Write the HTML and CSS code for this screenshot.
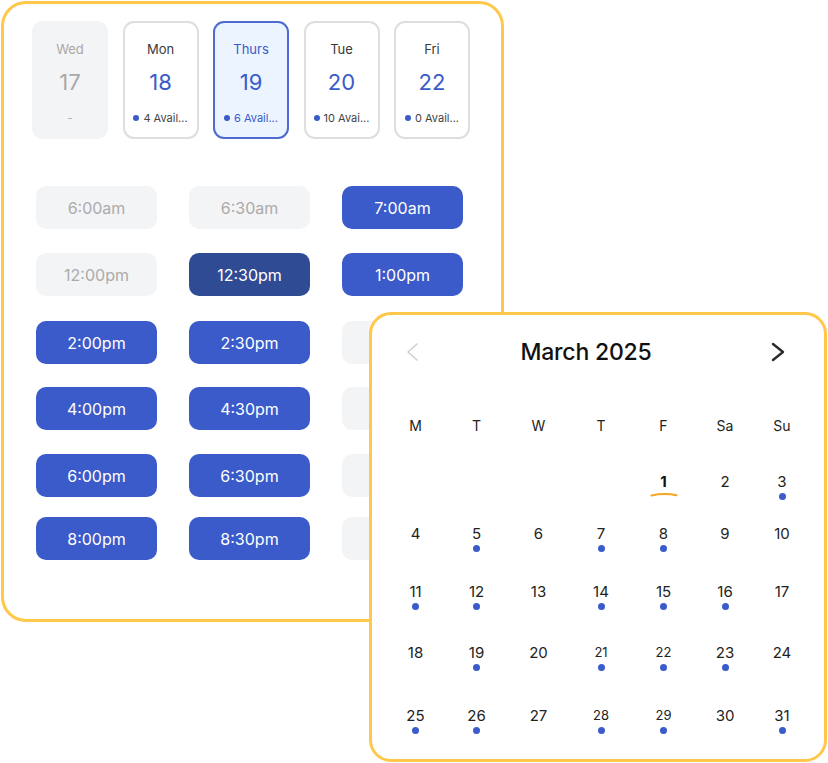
FILE: index.html
```html
<!DOCTYPE html>
<html>
<head>
<meta charset="utf-8">
<link rel="stylesheet" href="styles.css">
</head>
<body>
<div class="scheduler">
  <div class="days">
    <div class="day day-off">
      <div class="day-name">Wed</div>
      <div class="day-num">17</div>
      <div class="day-avail">-</div>
    </div>
    <div class="day">
      <div class="day-name">Mon</div>
      <div class="day-num">18</div>
      <div class="day-avail"><span class="dot"></span><span class="avail-text">4 Avail...</span></div>
    </div>
    <div class="day day-selected">
      <div class="day-name">Thurs</div>
      <div class="day-num">19</div>
      <div class="day-avail"><span class="dot"></span><span class="avail-text">6 Avail...</span></div>
    </div>
    <div class="day">
      <div class="day-name">Tue</div>
      <div class="day-num">20</div>
      <div class="day-avail"><span class="dot"></span><span class="avail-text">10 Avai...</span></div>
    </div>
    <div class="day">
      <div class="day-name">Fri</div>
      <div class="day-num">22</div>
      <div class="day-avail"><span class="dot"></span><span class="avail-text">0 Avail...</span></div>
    </div>
  </div>

  <div class="slots">
    <div class="slot slot-off">6:00am</div>
    <div class="slot slot-off">6:30am</div>
    <div class="slot">7:00am</div>
    <div class="slot slot-off">12:00pm</div>
    <div class="slot slot-selected">12:30pm</div>
    <div class="slot">1:00pm</div>
    <div class="slot">2:00pm</div>
    <div class="slot">2:30pm</div>
    <div class="slot slot-off"></div>
    <div class="slot">4:00pm</div>
    <div class="slot">4:30pm</div>
    <div class="slot slot-off"></div>
    <div class="slot">6:00pm</div>
    <div class="slot">6:30pm</div>
    <div class="slot slot-off"></div>
    <div class="slot">8:00pm</div>
    <div class="slot">8:30pm</div>
    <div class="slot slot-off"></div>
  </div>
</div>

<div class="calendar">
  <div class="cal-head">
    <svg class="chev chev-prev" width="14" height="20" viewBox="0 0 14 20"><polyline points="12,2 3,10 12,18" fill="none" stroke="#cfcfcf" stroke-width="1.6" stroke-linecap="round" stroke-linejoin="round"/></svg>
    <div class="cal-title">March 2025</div>
    <svg class="chev chev-next" width="14" height="20" viewBox="0 0 14 20"><polyline points="2,2 12,10 2,18" fill="none" stroke="#2b2b2b" stroke-width="2.4" stroke-linecap="round" stroke-linejoin="round"/></svg>
  </div>
  <div class="weekdays">
    <div>M</div><div>T</div><div>W</div><div>T</div><div>F</div><div>Sa</div><div>Su</div>
  </div>
  <div class="dates">
    <div class="date"></div>
    <div class="date"></div>
    <div class="date"></div>
    <div class="date"></div>
    <div class="date"><span class="num num-today">1</span><svg class="today-mark" width="28" height="5" viewBox="0 0 28 5"><path d="M1.5 3.5 Q14 0.8 26.5 3.2" fill="none" stroke="#f5a623" stroke-width="2" stroke-linecap="round"/></svg></div>
    <div class="date"><span class="num">2</span></div>
    <div class="date"><span class="num">3</span><span class="cdot"></span></div>

    <div class="date"><span class="num">4</span></div>
    <div class="date"><span class="num">5</span><span class="cdot"></span></div>
    <div class="date"><span class="num">6</span></div>
    <div class="date"><span class="num">7</span><span class="cdot"></span></div>
    <div class="date"><span class="num">8</span><span class="cdot"></span></div>
    <div class="date"><span class="num">9</span></div>
    <div class="date"><span class="num">10</span></div>

    <div class="date"><span class="num">11</span><span class="cdot"></span></div>
    <div class="date"><span class="num">12</span><span class="cdot"></span></div>
    <div class="date"><span class="num">13</span></div>
    <div class="date"><span class="num">14</span><span class="cdot"></span></div>
    <div class="date"><span class="num">15</span><span class="cdot"></span></div>
    <div class="date"><span class="num">16</span><span class="cdot"></span></div>
    <div class="date"><span class="num">17</span></div>

    <div class="date"><span class="num">18</span></div>
    <div class="date"><span class="num">19</span><span class="cdot"></span></div>
    <div class="date"><span class="num">20</span></div>
    <div class="date"><span class="num num-small">21</span><span class="cdot"></span></div>
    <div class="date"><span class="num num-small">22</span><span class="cdot"></span></div>
    <div class="date"><span class="num">23</span><span class="cdot"></span></div>
    <div class="date"><span class="num">24</span></div>

    <div class="date"><span class="num">25</span><span class="cdot"></span></div>
    <div class="date"><span class="num">26</span><span class="cdot"></span></div>
    <div class="date"><span class="num">27</span></div>
    <div class="date"><span class="num num-small">28</span><span class="cdot"></span></div>
    <div class="date"><span class="num num-small">29</span><span class="cdot"></span></div>
    <div class="date"><span class="num">30</span></div>
    <div class="date"><span class="num">31</span><span class="cdot"></span></div>
  </div>
</div>
</body>
</html>
```

FILE: styles.css
```css
* { box-sizing: border-box; }

html, body {
  margin: 0;
  padding: 0;
  background: #ffffff;
}

body {
  position: relative;
  width: 828px;
  height: 763px;
  overflow: hidden;
  font-family: Inter, "Liberation Sans", sans-serif;
  color: #222;
}

.scheduler {
  margin: 1px 0 0 1px;
  width: 503px;
  height: 621px;
  border: 3px solid #ffc84b;
  border-radius: 25px;
  background: #fff;
  padding: 17px 0 0 28px;
}

.days {
  display: flex;
  gap: 14.5px;
}

.day {
  width: 76px;
  height: 118px;
  border: 2px solid #dedede;
  border-radius: 11px;
  background: #fff;
  display: flex;
  flex-direction: column;
  align-items: center;
  padding: 18px 4px 0;
}

.day-name {
  font-size: 13px;
  line-height: 16px;
  color: #3a3a3a;
}

.day-num {
  margin-top: 12px;
  font-size: 22px;
  line-height: 26px;
  color: #3a5bc9;
}

.day-avail {
  margin-top: 16px;
  width: 100%;
  display: flex;
  align-items: center;
  justify-content: center;
  gap: 4px;
  font-size: 11px;
  line-height: 14px;
  color: #444;
}

.dot {
  flex: none;
  width: 6px;
  height: 6px;
  border-radius: 50%;
  background: #3a5bc9;
}

.avail-text {
  white-space: nowrap;
}

.day-off {
  background: #f3f4f6;
  border-color: #f3f4f6;
}
.day-off .day-name,
.day-off .day-num,
.day-off .day-avail { color: #a9a9a9; }

.day-selected {
  background: #ebf4ff;
  border-color: #4d6bd0;
}
.day-selected .day-name,
.day-selected .day-avail { color: #3a5bc9; }

.slots {
  margin: 47px 0 0 4px;
  display: grid;
  grid-template-columns: repeat(3, 121px);
  grid-template-rows: 67px 68px 66px 67px 63px 43px;
  column-gap: 32px;
}

.slot {
  height: 43px;
  border-radius: 10px;
  background: #3a5bc9;
  color: #fff;
  font-size: 16px;
  display: flex;
  align-items: center;
  justify-content: center;
}

.slot-off {
  background: #f3f4f6;
  color: #ababab;
}

.slot-selected {
  background: #2f4b94;
}

.calendar {
  position: absolute;
  left: 369px;
  top: 312px;
  width: 458px;
  height: 450px;
  border: 3px solid #ffc84b;
  border-radius: 22px;
  background: #fff;
  padding: 21px 13px 0;
}

.cal-head {
  height: 32px;
  display: flex;
  align-items: center;
  justify-content: space-between;
  padding: 0 26px 0 20px;
}

.cal-title {
  margin-right: 18px;
  font-size: 23px;
  font-weight: 500;
  color: #111;
  letter-spacing: -0.2px;
}

.weekdays,
.dates {
  display: grid;
  grid-template-columns: 61px 61px 63px 62px 63px 60px 54px;
}

.weekdays {
  margin-top: 48px;
  height: 20px;
  line-height: 20px;
  text-align: center;
  font-size: 14px;
  color: #222;
}

.dates {
  margin-top: 36px;
  grid-template-rows: 52px 58px 61px 63px 40px;
}

.date {
  display: flex;
  flex-direction: column;
  align-items: center;
}

.num {
  height: 20px;
  line-height: 20px;
  font-size: 15px;
  color: #222;
}

.num-small {
  font-size: 13px;
  line-height: 18px;
}

.num-today {
  font-weight: 700;
  color: #111;
}

.today-mark {
  display: block;
  margin-top: 0;
}

.cdot {
  width: 7px;
  height: 7px;
  border-radius: 50%;
  background: #3a5bc9;
  margin-top: 1px;
}
```
